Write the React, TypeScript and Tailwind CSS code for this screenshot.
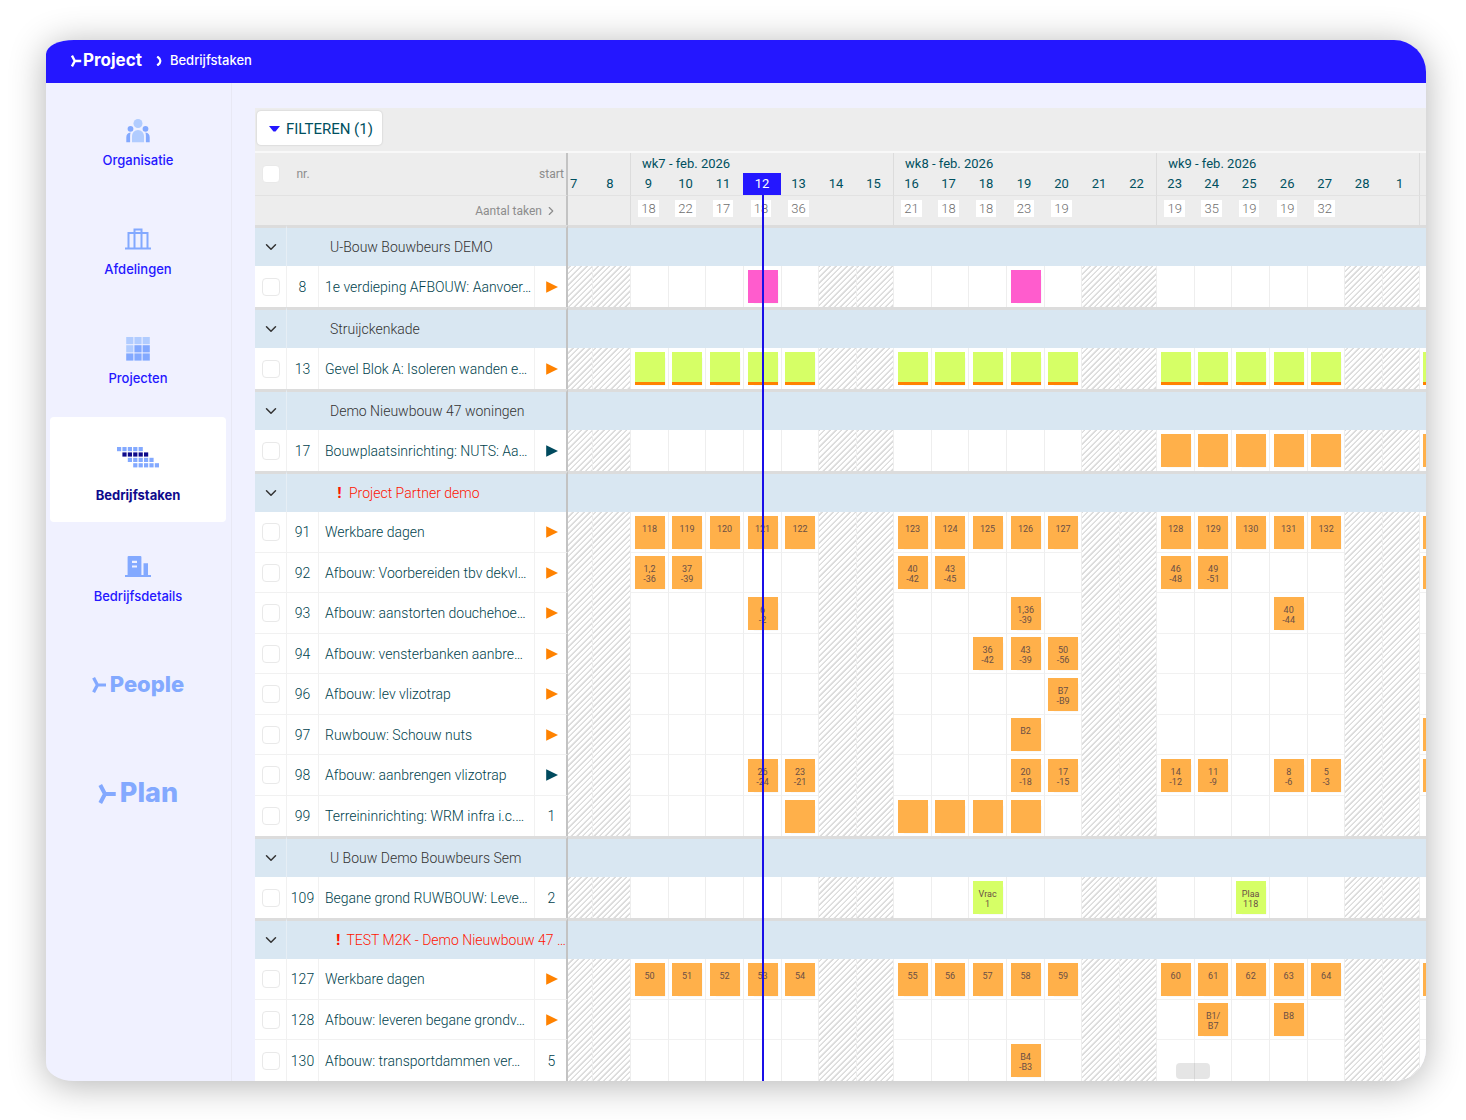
import { ReactNode } from 'react';
import clsx from 'clsx';
import { ChevronDown, ChevronRight } from 'lucide-react';

type Task = {
  nr: number;
  name: string;
  start: string;
  color?: string;
  cells: Record<number, string>;
};

type Group = {
  title: string;
  warning?: boolean;
  tasks: Task[];
};

const DAYS = [
  7, 8, 9, 10, 11, 12, 13, 14, 15, 16, 17, 18, 19, 20, 21, 22, 23, 24, 25, 26,
  27, 28, 1, 2,
];
const TODAY = 12;
const WEEKEND = [7, 8, 14, 15, 21, 22, 28, 1];
const MONDAYS = [9, 16, 23, 2];
const WEEK_COLS = [38, 37, 38, 38, 37, 38, 37];

const COUNTS: Record<number, number> = {
  9: 18, 10: 22, 11: 17, 12: 18, 13: 36,
  16: 21, 17: 18, 18: 18, 19: 23, 20: 19,
  23: 19, 24: 35, 25: 19, 26: 19, 27: 32,
};

const EMPTY_WEEKS = {
  9: '', 10: '', 11: '', 12: '', 13: '',
  16: '', 17: '', 18: '', 19: '', 20: '',
  23: '', 24: '', 25: '', 26: '', 27: '', 2: '',
};

const GROUPS: Group[] = [
  {
    title: 'U-Bouw Bouwbeurs DEMO',
    tasks: [
      { nr: 8, name: '1e verdieping AFBOUW: Aanvoer…', start: 'orange', color: 'pink', cells: { 12: '', 19: '' } },
    ],
  },
  {
    title: 'Struijckenkade',
    tasks: [
      { nr: 13, name: 'Gevel Blok A: Isoleren wanden e…', start: 'orange', color: 'lime-line', cells: EMPTY_WEEKS },
    ],
  },
  {
    title: 'Demo Nieuwbouw 47 woningen',
    tasks: [
      { nr: 17, name: 'Bouwplaatsinrichting: NUTS: Aa…', start: 'teal', cells: { 23: '', 24: '', 25: '', 26: '', 27: '', 2: '' } },
    ],
  },
  {
    title: 'Project Partner demo',
    warning: true,
    tasks: [
      {
        nr: 91, name: 'Werkbare dagen', start: 'orange',
        cells: {
          9: '118', 10: '119', 11: '120', 12: '121', 13: '122',
          16: '123', 17: '124', 18: '125', 19: '126', 20: '127',
          23: '128', 24: '129', 25: '130', 26: '131', 27: '132', 2: '',
        },
      },
      {
        nr: 92, name: 'Afbouw: Voorbereiden tbv dekvl…', start: 'orange',
        cells: { 9: '1,2\n-36', 10: '37\n-39', 16: '40\n-42', 17: '43\n-45', 23: '46\n-48', 24: '49\n-51', 2: '' },
      },
      { nr: 93, name: 'Afbouw: aanstorten douchehoe…', start: 'orange', cells: { 12: '6\n-2', 19: '1,36\n-39', 26: '40\n-44' } },
      { nr: 94, name: 'Afbouw: vensterbanken aanbre…', start: 'orange', cells: { 18: '36\n-42', 19: '43\n-39', 20: '50\n-56' } },
      { nr: 96, name: 'Afbouw: lev vlizotrap', start: 'orange', cells: { 20: 'B7\n-B9' } },
      { nr: 97, name: 'Ruwbouw: Schouw nuts', start: 'orange', cells: { 19: 'B2', 2: '' } },
      {
        nr: 98, name: 'Afbouw: aanbrengen vlizotrap', start: 'teal',
        cells: {
          12: '26\n-24', 13: '23\n-21', 19: '20\n-18', 20: '17\n-15',
          23: '14\n-12', 24: '11\n-9', 26: '8\n-6', 27: '5\n-3', 2: '',
        },
      },
      { nr: 99, name: 'Terreininrichting: WRM infra i.c.…', start: '1', cells: { 13: '', 16: '', 17: '', 18: '', 19: '' } },
    ],
  },
  {
    title: 'U Bouw Demo Bouwbeurs Sem',
    tasks: [
      { nr: 109, name: 'Begane grond RUWBOUW: Leve…', start: '2', color: 'lime', cells: { 18: 'Vrac\n1', 25: 'Plaa\n118' } },
    ],
  },
  {
    title: 'TEST M2K - Demo Nieuwbouw 47 …',
    warning: true,
    tasks: [
      {
        nr: 127, name: 'Werkbare dagen', start: 'orange',
        cells: {
          9: '50', 10: '51', 11: '52', 12: '53', 13: '54',
          16: '55', 17: '56', 18: '57', 19: '58', 20: '59',
          23: '60', 24: '61', 25: '62', 26: '63', 27: '64', 2: '',
        },
      },
      { nr: 128, name: 'Afbouw: leveren begane grondv…', start: 'orange', cells: { 24: 'B1/\nB7', 26: 'B8' } },
      { nr: 130, name: 'Afbouw: transportdammen ver…', start: '5', cells: { 19: 'B4\n-B3' } },
    ],
  },
];

const Mark = ({ className }: { className: string }) => (
  <svg viewBox="0 0 14 16" className={className} fill="none" stroke="currentColor">
    <path d="M1.6 .8 L5.4 8 L1.6 15.2 M5.4 8 H14" strokeWidth="3.2" />
  </svg>
);

const PeopleIcon = () => (
  <svg viewBox="0 0 24 24" className="h-6 w-6">
    <g fill="#b1ccff">
      <circle cx="12" cy="4.5" r="4.5" />
      <path d="M6 23.200V17a6 6 0 0 1 12 0v6.200z" />
    </g>
    <g fill="#83a9ff">
      <circle cx="4.500" cy="9.800" r="2.900" />
      <circle cx="19.500" cy="9.800" r="2.900" />
      <path d="M.3 23.200V18.500a5 5 0 0 1 4.300-5q-.5 1.700-.5 3.500v6.200zM23.700 23.200V18.500a5 5 0 0 0-4.300-5q.5 1.700.5 3.500v6.200z" />
    </g>
  </svg>
);

const DepartmentsIcon = () => (
  <svg viewBox="0 0 26 24" className="h-6 w-[26px]" fill="none" stroke="#83a9ff" strokeWidth="2">
    <path d="M0 20.500H26M3.500 20.500V5H22.500V20.500M9.500 20.500V1.500H16.500V20.500M9.500 5H16.500" />
  </svg>
);

const ProjectsIcon = () => (
  <svg viewBox="0 0 24 24" className="h-6 w-6">
    {[0, 1, 2].map((row) =>
      [0, 1, 2].map((col) => (
        <rect
          key={`${row}${col}`}
          x={col * 8.2 + 0.2}
          y={row * 8.2}
          width="7.2"
          height="7.2"
          fill={row === 0 || (row === 1 && col === 0) ? '#b1ccff' : '#83a9ff'}
        />
      ))
    )}
  </svg>
);

const TasksIcon = () => (
  <svg viewBox="0 0 42 24" className="h-6 w-[42px]">
    {[0, 1, 2, 3].map((row) =>
      [0, 1, 2, 3, 4].map((col) => (
        <rect
          key={`${row}${col}`}
          x={(row + col) * 5.4}
          y={row * 5.4 + 1}
          width="4.2"
          height="4.2"
          fill={row === 1 ? '#0e0a8c' : '#83a9ff'}
        />
      ))
    )}
  </svg>
);

const CompanyIcon = () => (
  <svg viewBox="0 0 26 24" className="h-6 w-[26px]">
    <path
      fill="#83a9ff"
      fillRule="evenodd"
      d="M2.600 20V2a1 1 0 0 1 1-1H15.400a1 1 0 0 1 1 1V20H18.500V8.200H23V20H26V22H0V20zM7 5.800V8H12V5.800zM7 10.400V12.600H12V10.400z"
    />
  </svg>
);

const NavItem = ({
  label,
  icon,
  active,
}: {
  label: string;
  icon: ReactNode;
  active?: boolean;
}) => (
  <a
    href="#"
    className={clsx(
      'flex h-[105px] flex-col items-center rounded pt-[29px] text-[13px] leading-5',
      active ? 'gap-[15px] bg-white font-bold text-[#0e0a8c]' : 'gap-[7px] font-medium text-[#2417ff]'
    )}
  >
    {icon}
    <span>{label}</span>
  </a>
);

const Start = ({ value }: { value: string }) => {
  if (value === 'orange' || value === 'teal') {
    return (
      <svg
        viewBox="0 0 12 12"
        className={clsx('mx-auto h-3 w-3', value === 'orange' ? 'fill-[#ff8200]' : 'fill-[#004a5e]')}
      >
        <path d="M.2 .2L12 6L.2 11.800z" />
      </svg>
    );
  }
  return <>{value}</>;
};

const Block = ({ text, color }: { text: string; color?: string }) => (
  <div
    className={clsx(
      'h-[33px] w-[30px] whitespace-pre pt-2 text-center text-[9px] leading-[10px] font-normal text-[#6b4f45] shadow-[3px_3px_1px_-3px_rgba(0,0,0,0.15)]',
      !color && 'bg-[#ffb04a]',
      color === 'pink' && 'bg-[#ff5ccd]',
      color === 'lime' && 'bg-[#d6ff66]',
      color === 'lime-line' && 'border-b-[3px] border-[#ff8200] bg-[#d6ff66]'
    )}
  >
    {text}
  </div>
);

const Check = ({ label }: { label: string }) => (
  <input
    type="checkbox"
    aria-label={label}
    className="mx-auto block h-[18px] w-[18px] appearance-none rounded border border-[#e9e9e9] bg-white"
  />
);

const TaskRow = ({ task, index, last }: { task: Task; index: number; last: boolean }) => {
  const line = last ? '' : 'border-b border-b-[#f1f1f1]';
  return (
    <tr className={clsx('bg-white text-[#003f4d]', index % 2 ? 'h-10' : 'h-[41px]')}>
      <td className={clsx('border-r border-r-[#f1f1f1]', line)}>
        <Check label={`Selecteer taak ${task.nr}`} />
      </td>
      <td className={clsx('border-r border-r-[#f1f1f1] text-center', line)}>{task.nr}</td>
      <td className={clsx('whitespace-nowrap border-r border-r-[#f1f1f1] pl-1.5', line)}>{task.name}</td>
      <td className={clsx('border-r-2 border-r-[#c3c3c3] pl-0.5 text-center', line)}>
        <Start value={task.start} />
      </td>
      {DAYS.map((day) => (
        <td
          key={day}
          className={clsx(
            day === 7 ? '' : 'border-l border-l-[#eeeeee]',
            WEEKEND.includes(day)
              ? 'bg-[repeating-linear-gradient(135deg,#ffffff_0px,#ffffff_2px,#dcdcdc_3px,#dcdcdc_4px)] bg-fixed'
              : line
          )}
        >
          {day in task.cells && (
            <div className={clsx('flex', day === 2 ? 'pl-[3px]' : 'justify-center')}>
              <Block text={task.cells[day]} color={task.color} />
            </div>
          )}
        </td>
      ))}
    </tr>
  );
};

const GroupRows = ({ group }: { group: Group }) => (
  <tbody>
    <tr className="h-[41px] bg-[#d9e7f2] text-[#333333]">
      <td className="border-r border-t-[3px] border-r-[#e6eef5] border-t-[#dcdcdc]">
        <button aria-label={`${group.title} inklappen`} className="mx-auto block">
          <ChevronDown size={18} strokeWidth={2} />
        </button>
      </td>
      <td
        colSpan={3}
        className="whitespace-nowrap border-r-2 border-t-[3px] border-r-[#c3c3c3] border-t-[#dcdcdc] pl-[43px]"
      >
        {group.warning ? (
          <span className="flex gap-1.5 pl-1.5 text-[#ff1400]">
            <span className="w-[7px] text-center font-black">!</span>
            {group.title}
          </span>
        ) : (
          group.title
        )}
      </td>
      <td colSpan={DAYS.length} className="border-t-[3px] border-t-[#dcdcdc]" />
    </tr>
    {group.tasks.map((task, i) => (
      <TaskRow key={task.nr} task={task} index={i} last={i === group.tasks.length - 1} />
    ))}
  </tbody>
);

const Planning = () => (
  <table className="w-full table-fixed border-separate border-spacing-0 font-['Roboto',sans-serif] text-sm leading-5 font-light">
    <colgroup>
      <col className="w-8" />
      <col className="w-8" />
      <col className="w-[216px]" />
      <col className="w-[33px]" />
      <col className="w-6" />
      <col className="w-[38px]" />
      {[0, 1, 2].map((week) =>
        WEEK_COLS.map((width, i) => (
          <col key={`${week}-${i}`} className={width === 38 ? 'w-[38px]' : 'w-[37px]'} />
        ))
      )}
      <col />
    </colgroup>
    <thead className="bg-[#ededed] text-[#00505f]">
      <tr className="h-5">
        <th rowSpan={2} className="border-b border-[#e2e2e2]">
          <Check label="Selecteer alle taken" />
        </th>
        <th rowSpan={2} className="border-b border-[#e2e2e2] text-xs font-normal text-[#8c8c8c]">
          nr.
        </th>
        <th
          rowSpan={2}
          colSpan={2}
          className="border-r-2 border-b border-r-[#c3c3c3] border-b-[#e2e2e2] pr-0.5 text-right text-xs font-normal text-[#8c8c8c]"
        >
          start
        </th>
        <th colSpan={2} />
        {['wk7 - feb. 2026', 'wk8 - feb. 2026', 'wk9 - feb. 2026'].map((week) => (
          <th
            key={week}
            colSpan={7}
            className="border-l border-[#dcdcdc] pt-0.5 pl-[11px] text-left text-[13px] leading-[18px] font-normal"
          >
            {week}
          </th>
        ))}
        <th className="border-l border-[#dcdcdc]" />
      </tr>
      <tr className="h-[23px]">
        {DAYS.map((day) => (
          <th
            key={day}
            className={clsx(
              'border-b border-b-[#e2e2e2] text-[13px] font-normal',
              MONDAYS.includes(day) && 'border-l border-l-[#dcdcdc]',
              day === 7 && 'pl-0.5 text-left',
              day === TODAY ? 'relative p-0' : 'pr-0.5'
            )}
          >
            {day === TODAY ? (
              <>
                <div className="h-[22px] bg-[#2417ff] leading-[22px] text-white">{day}</div>
                <div className="absolute top-full left-1/2 z-10 h-[1200px] w-0.5 bg-[#1a0fe8]" />
              </>
            ) : (
              day !== 2 && day
            )}
          </th>
        ))}
      </tr>
      <tr className="h-[29px]">
        <td colSpan={4} className="border-r-2 border-[#c3c3c3] pr-2 text-xs font-normal text-[#8c8c8c]">
          <span className="flex items-center justify-end gap-0.5">
            Aantal taken
            <ChevronRight size={14} />
          </span>
        </td>
        {DAYS.map((day) => (
          <td
            key={day}
            className={clsx(
              'pr-0.5 pb-[3px] text-center text-[13px] text-[#6e6e6e]',
              MONDAYS.includes(day) && 'border-l border-[#dcdcdc]'
            )}
          >
            {COUNTS[day] && (
              <span className="inline-block bg-white px-[3px] leading-[17px]">{COUNTS[day]}</span>
            )}
          </td>
        ))}
      </tr>
    </thead>
    {GROUPS.map((group) => (
      <GroupRows key={group.title} group={group} />
    ))}
  </table>
);

const App = () => {
  return (
    <div className="min-h-screen bg-white pt-10 pr-10 pb-[39px] pl-[46px] font-['Inter',sans-serif]">
      <div className="relative overflow-hidden rounded-[32px] [border-top-left-radius:28px_14px] [border-bottom-left-radius:28px_18px] bg-[#f0f1ff] shadow-[0_4px_36px_rgba(0,0,0,0.3)]">
        <header className="flex h-[43px] items-center bg-[#2417ff] pb-0.5 pl-6 text-white">
          <a href="#" className="flex items-center gap-px text-[17px] font-bold">
            <Mark className="h-3 w-3" />
            Project
          </a>
          <svg viewBox="0 0 6 10" className="mr-2 ml-[14px] h-2.5 w-1.5" fill="none" stroke="currentColor">
            <path d="M1.200 .5Q4.800 3 4.200 5Q4.800 7 1.200 9.500" strokeWidth="2.200" />
          </svg>
          <span className="text-[13px] font-medium">Bedrijfstaken</span>
        </header>
        <div className="flex">
          <nav className="flex w-[186px] shrink-0 flex-col gap-1 border-r border-[#e8e8f4] pt-[7px] pr-[5px] pl-1">
            <NavItem label="Organisatie" icon={<PeopleIcon />} />
            <NavItem label="Afdelingen" icon={<DepartmentsIcon />} />
            <NavItem label="Projecten" icon={<ProjectsIcon />} />
            <NavItem label="Bedrijfstaken" icon={<TasksIcon />} active />
            <NavItem label="Bedrijfsdetails" icon={<CompanyIcon />} />
            <a
              href="#"
              className="flex h-[105px] items-center justify-center gap-1 pb-1.5 text-[22px] font-extrabold text-[#83a9ff]"
            >
              <Mark className="h-4 w-3.5" />
              People
            </a>
            <a
              href="#"
              className="flex h-[105px] items-center justify-center gap-1 pb-1.5 text-[27px] font-extrabold text-[#83a9ff]"
            >
              <Mark className="h-5 w-[18px]" />
              Plan
            </a>
          </nav>
          <main className="min-w-0 flex-1 pt-[25px] pl-[23px]">
            <div className="flex h-[45px] border-b-2 border-[#f8f8f8] bg-[#ededed] pt-[3px] pl-0.5">
              <button className="flex h-[34px] w-[125px] items-center gap-1.5 rounded bg-white pt-0.5 pl-3 font-['Roboto',sans-serif] text-[15px] text-[#00505f] shadow-[0_0_2px_rgba(0,0,0,0.2)]">
                <svg viewBox="0 0 11 6" className="h-1.5 w-[11px] fill-[#2417ff]">
                  <path d="M0 0H11L6.500 5.500H4.500z" />
                </svg>
                FILTEREN (1)
              </button>
            </div>
            <Planning />
          </main>
        </div>
        <div className="absolute right-[216px] bottom-0.5 h-4 w-[34px] rounded-sm bg-black/10" />
      </div>
    </div>
  );
};

export default App;
